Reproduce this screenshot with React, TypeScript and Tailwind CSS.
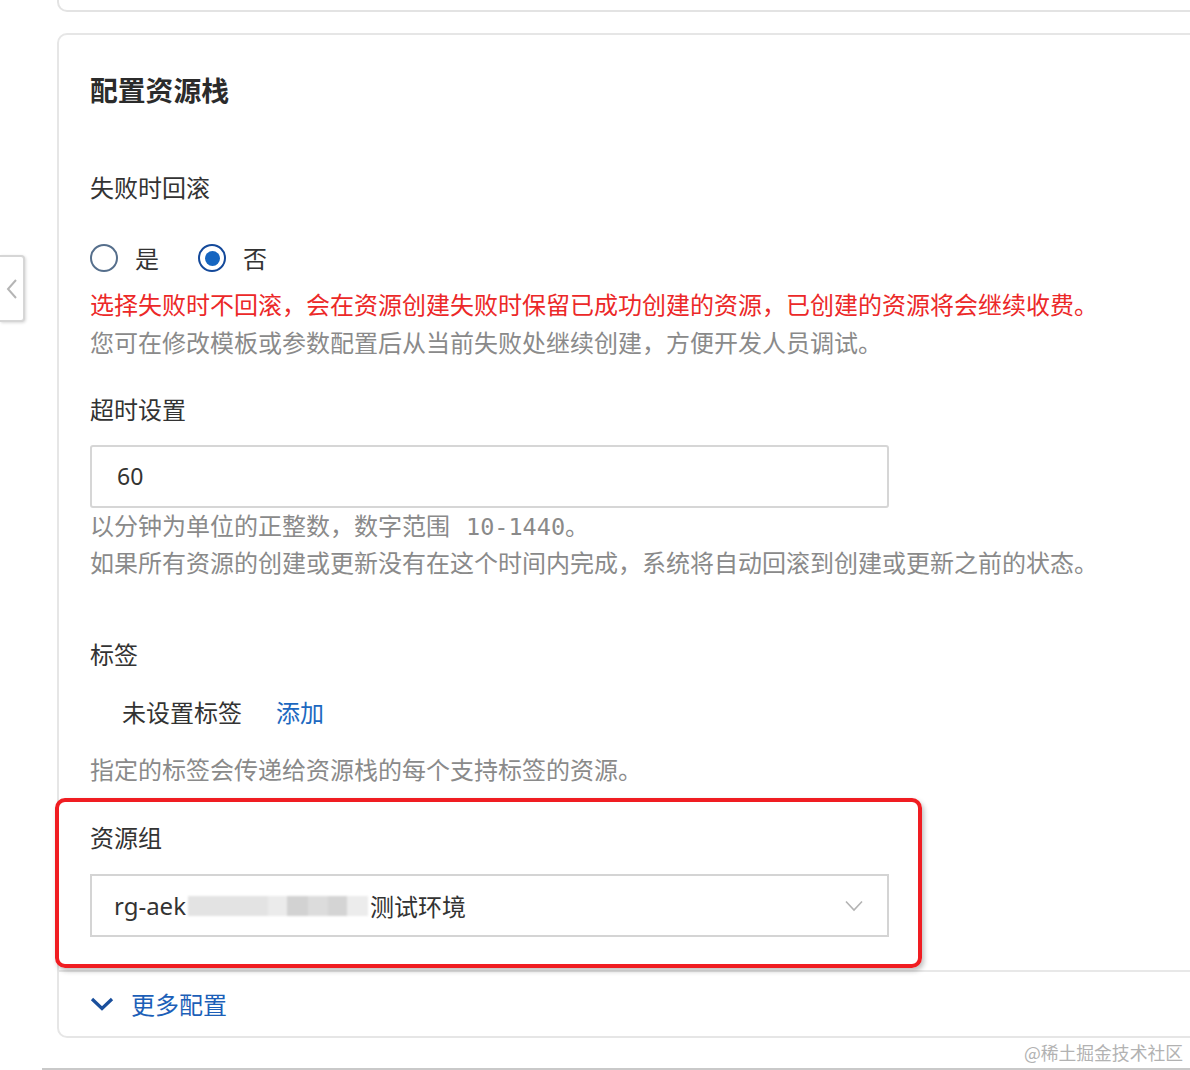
import React from "react";

const cjk = "font-['Noto_Sans_CJK_SC','Noto_Sans',sans-serif]";

function Radio({ checked, label }: { checked?: boolean; label: string }) {
    return (
        <label className="flex items-center">
            {checked ? (
                <span className="flex h-[28px] w-[28px] items-center justify-center rounded-full border-[2.5px] border-[#14499a] bg-white">
                    <span className="h-[15px] w-[15px] rounded-full bg-[#1565c0]" />
                </span>
            ) : (
                <span className="h-[28px] w-[28px] rounded-full border-2 border-[#566f8c] bg-white" />
            )}
            <span className="ml-[17px] text-[#333]">{label}</span>
        </label>
    );
}

function Label({ children, className = "" }: { children: React.ReactNode; className?: string }) {
    return <div className={`leading-[36px] text-[#333] ${className}`}>{children}</div>;
}

export default function App() {
    return (
        <div className={`relative h-[1070px] w-[1190px] overflow-hidden bg-white ${cjk} text-[24px]`}>
            {/* previous card, only its bottom edge is visible */}
            <div className="ml-[57px] h-[12px] w-[1160px] rounded-b-[10px] border-x-2 border-b-2 border-[#e3e3e3]" />

            <div className="ml-[57px] mt-[21px] w-[1160px] rounded-[10px] border-2 border-[#e6e6e6] pt-[33px] pb-[14px]">
                <div className="px-[31px]">
                    <h2 className="text-[27.8px] font-semibold leading-[42px] text-[#2b2b2b]">配置资源栈</h2>

                    <Label className="mt-[59px]">失败时回滚</Label>
                    <div className="mt-[35px] flex h-[36px] items-center gap-[39px]">
                        <Radio label="是" />
                        <Radio label="否" checked />
                    </div>
                    <div className="mt-[9px] leading-[38px]">
                        <p className="text-[#ec2828]">选择失败时不回滚，会在资源创建失败时保留已成功创建的资源，已创建的资源将会继续收费。</p>
                        <p className="text-[#8a8a8a]">您可在修改模板或参数配置后从当前失败处继续创建，方便开发人员调试。</p>
                    </div>

                    <Label className="mt-[30px]">超时设置</Label>
                    <div className="mt-[18px] flex h-[63px] w-[799px] items-center rounded-[3px] border-2 border-[#d6d6d6] pl-[25px] font-['Noto_Sans','Liberation_Sans',sans-serif] text-[23px] text-[#333]">
                        60
                    </div>
                    <div className="-mt-[2px] leading-[37px] text-[#8a8a8a]">
                        <p>
                            以分钟为单位的正整数，数字范围<span className="ml-[16px] font-['DejaVu_Sans_Mono',monospace] text-[23.5px] leading-none">10-1440</span>。
                        </p>
                        <p>如果所有资源的创建或更新没有在这个时间内完成，系统将自动回滚到创建或更新之前的状态。</p>
                    </div>

                    <Label className="mt-[56px]">标签</Label>
                    <div className="mt-[22px] flex h-[36px] items-center pl-[32px]">
                        <span className="text-[#333]">未设置标签</span>
                        <a className="ml-[34px] cursor-pointer text-[#1c68c0]">添加</a>
                    </div>
                    <p className="mt-[21px] leading-[36px] text-[#8a8a8a]">指定的标签会传递给资源栈的每个支持标签的资源。</p>

                    <Label className="mt-[32px]">资源组</Label>
                    <div className="mt-[19px] flex h-[63px] w-[799px] items-center border-2 border-[#d4d4d4] pl-[22px] pr-[24px] text-[#333]">
                        <span className="font-['Noto_Sans','Liberation_Sans',sans-serif] text-[24px]">rg-aek</span>
                        <span className="ml-[2px] flex h-[20px] items-stretch blur-[1px]">
                            <span className="w-[80px] bg-[#e3e3e3]" />
                            <span className="w-[19px] bg-[#ebebeb]" />
                            <span className="w-[21px] bg-[#d2d2d2]" />
                            <span className="w-[20px] bg-[#dcdcdc]" />
                            <span className="w-[19px] bg-[#d4d4d4]" />
                            <span className="w-[21px] bg-[#ececec]" />
                        </span>
                        <span className="ml-[2px]">测试环境</span>
                        <svg className="ml-auto" width="18" height="12" viewBox="0 0 18 12" fill="none">
                            <path d="M1 1.5 L9 10 L17 1.5" stroke="#b3b3b3" strokeWidth="1.6" />
                        </svg>
                    </div>
                </div>

                <div className="mt-[33px] h-[2px] bg-[#e8e8e8]" />

                <div className="mt-[14px] flex h-[36px] items-center px-[31px] text-[#1c5fb8]">
                    <svg width="24" height="16" viewBox="0 0 24 16" fill="none">
                        <path d="M2 3 L12 12.5 L22 3" stroke="#1a4f9c" strokeWidth="3.2" strokeLinejoin="miter" />
                    </svg>
                    <span className="ml-[17px]">更多配置</span>
                </div>
            </div>

            <div className="flex h-[30px] items-center justify-end pr-[7px] text-[17.8px] leading-none text-[#b2b2b2]">
                @稀土掘金技术社区
            </div>
            <div className="ml-[42px] h-[3px] bg-[#c9c9c9]" />

            {/* collapse tab on the left edge */}
            <div className="absolute left-0 top-[255px] flex h-[67px] w-[25px] items-center justify-center rounded-r-[4px] border-2 border-l-0 border-[#d6d6d6] bg-white shadow-[1px_1px_3px_rgba(0,0,0,0.15)]">
                <svg width="12" height="24" viewBox="0 0 12 24" fill="none">
                    <path d="M10 3 L2 12 L10 21" stroke="#b5b5b5" strokeWidth="2" />
                </svg>
            </div>

            {/* red annotation frame */}
            <div className="pointer-events-none absolute left-[55px] top-[798px] h-[170px] w-[867px] rounded-[10px] border-[4px] border-[#f01d22] shadow-[2px_3px_5px_rgba(0,0,0,0.25)]" />
        </div>
    );
}
